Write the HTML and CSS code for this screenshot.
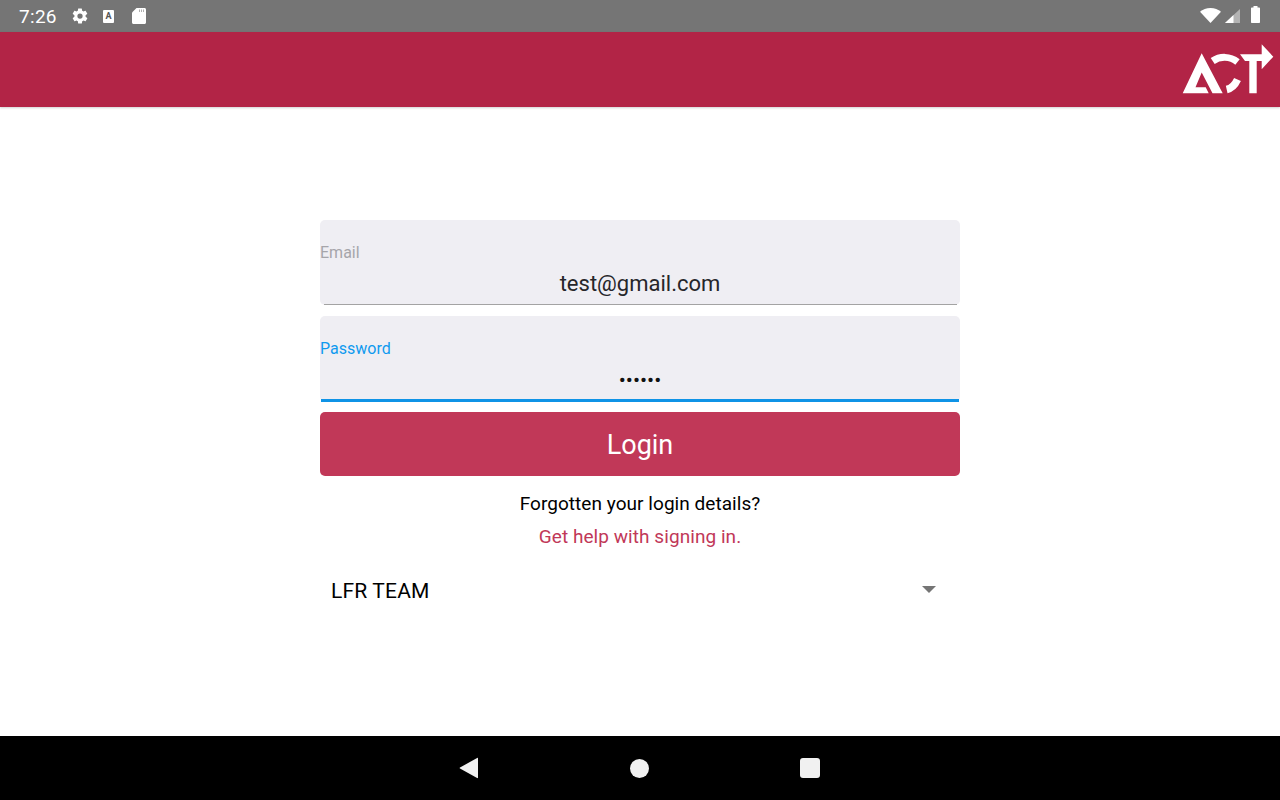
FILE: index.html
```html
<!DOCTYPE html>
<html lang="en">
<head>
    <meta charset="UTF-8">
    <meta name="viewport" content="width=device-width, initial-scale=1.0">
    <title>ACT Login</title>
    <link rel="stylesheet" href="styles.css">
</head>
<body>
    <div class="statusBar">
        <span class="clock">7:26</span>
        <svg class="statusIcon" width="18" height="18" viewBox="0 0 24 24"><path fill="#fff" d="M19.4 13c.04-.32.1-.66.1-1s-.06-.68-.1-1l2.1-1.65c.2-.15.25-.42.12-.64l-2-3.46c-.12-.22-.39-.3-.61-.22l-2.49 1c-.52-.4-1.08-.73-1.69-.98l-.38-2.65A.49.49 0 0 0 14 2h-4c-.25 0-.46.18-.49.42l-.38 2.65c-.61.25-1.17.59-1.69.98l-2.49-1c-.23-.09-.49 0-.61.22l-2 3.46c-.13.22-.07.49.12.64L4.6 11c-.04.32-.1.66-.1 1s.06.68.1 1l-2.1 1.65c-.2.15-.25.42-.12.64l2 3.46c.12.22.39.3.61.22l2.49-1c.52.4 1.08.73 1.69.98l.38 2.65c.03.24.24.42.49.42h4c.25 0 .46-.18.49-.42l.38-2.65c.61-.25 1.17-.59 1.69-.98l2.49 1c.23.09.49 0 .61-.22l2-3.46c.12-.22.07-.49-.12-.64L19.4 13zM12 15.5a3.500 3.500 0 1 1 0-7 3.500 3.500 0 0 1 0 7z"/></svg>
        <span class="fontBadge">A</span>
        <svg class="sdCard" width="14" height="16" viewBox="0 0 14 16"><path fill="#fff" d="M4.500 0H12.500C13.300 0 14 .7 14 1.500V14.500C14 15.300 13.300 16 12.500 16H1.500C.7 16 0 15.300 0 14.500V4.500z"/><path fill="#b0b0b0" d="M7 1.500h1V4H7zM9 1.500h1V4H9zM11 1.500h1V4h-1z"/></svg>
        <div class="statusRight">
            <svg width="21" height="15" viewBox="0 0 21 15"><path fill="#fff" d="M0 3.700C2.700 1.400 6.400 0 10.500 0s7.800 1.400 10.500 3.700L10.500 15z"/></svg>
            <svg class="signal" width="15" height="14" viewBox="0 0 15 14"><path fill="#fff" opacity="0.45" d="M15 0v14H0z"/><path fill="#fff" d="M8.500 6v8H0z"/></svg>
            <svg class="battery" width="9" height="17" viewBox="0 0 9 17"><path fill="#fff" d="M2.500 0h4v1.500H8c.6 0 1 .4 1 1V16c0 .6-.4 1-1 1H1c-.6 0-1-.4-1-1V2.500c0-.6.4-1 1-1h1.500z"/></svg>
        </div>
    </div>

    <header class="appHeader">
        <svg class="logo" width="92" height="52" viewBox="0 0 92 52">
            <!-- A -->
            <path fill="#fff" d="M19.700 9.300 40.700 49.300H30.500L19.700 28.500 13.500 43.300H23.700L26.700 49.300H.7z"/>
            <!-- C -->
            <path fill="none" stroke="#fff" stroke-width="7" d="M30.700 17C38 12 48 12 55.500 18"/>
            <path fill="none" stroke="#fff" stroke-width="7.500" d="M55.500 35.500C53 41 49 44.500 44.700 45.500"/>
            <!-- T and arrow -->
            <path fill="#fff" d="M58 10.300H79.700V.3L91.300 12.700 79.700 25.300V17H74.700V49.300H67.300V17H63z"/>
        </svg>
    </header>

    <main class="content">
        <form class="loginForm">
            <div class="field">
                <label class="fieldLabel">Email</label>
                <div class="fieldValue">test@gmail.com</div>
            </div>
            <div class="field field-active">
                <label class="fieldLabel">Password</label>
                <div class="fieldValue fieldValue-secret">••••••</div>
            </div>
            <button type="button" class="loginBtn">Login</button>
            <p class="helpText">Forgotten your login details?</p>
            <a class="helpLink">Get help with signing in.</a>
            <div class="teamSelect">
                <span>LFR TEAM</span>
                <span class="caret"></span>
            </div>
        </form>
    </main>

    <nav class="navBar">
        <svg width="20" height="22" viewBox="0 0 20 22"><path fill="#f1f1f1" d="M19 1.500v19c0 .6-.4.800-.9.500L1 11.500c-.5-.3-.5-.7 0-1L18.100 1c.5-.3.9-.1.9.500z"/></svg>
        <span class="navCircle"></span>
        <span class="navSquare"></span>
    </nav>
</body>
</html>
```

FILE: styles.css
```css
* {
    box-sizing: border-box;
}
html, body {
    height: 100%;
}
body {
    margin: 0;
    display: flex;
    flex-direction: column;
    height: 800px;
    overflow: hidden;
    background: #fff;
    font-family: Roboto, sans-serif;
    color: #000;
}

/* Status bar */
.statusBar {
    display: flex;
    align-items: center;
    height: 32px;
    padding: 0 20px 0 19px;
    background: #757575;
    color: #fff;
}
.clock {
    width: 52px;
    font-size: 19px;
    letter-spacing: 0.3px;
}
.statusIcon {
    flex: none;
}
.fontBadge {
    display: flex;
    align-items: center;
    justify-content: center;
    width: 11px;
    height: 13px;
    margin: 0 18px 0 14px;
    border-radius: 1px;
    background: #fff;
    color: #555;
    font-size: 9px;
    font-weight: 700;
}
.statusRight {
    display: flex;
    align-items: flex-end;
    height: 17px;
    margin: 0 0 3px auto;
}
.signal {
    margin-left: 4px;
}
.battery {
    margin-left: 11px;
}

/* Header */
.appHeader {
    display: flex;
    justify-content: flex-end;
    align-items: flex-start;
    height: 75px;
    padding: 12px 6px 0 0;
    background: #b22446;
    box-shadow: 0 1px 2px rgba(0, 0, 0, 0.18);
}

/* Form */
.content {
    flex: 1;
    display: flex;
    justify-content: center;
    padding-top: 113px;
}
.loginForm {
    display: flex;
    flex-direction: column;
    width: 640px;
    text-align: center;
}
.field {
    position: relative;
    height: 85px;
    margin-bottom: 11px;
    padding-top: 24px;
    border-radius: 5px;
    background: #efeef3;
    text-align: left;
}
.field::after {
    content: "";
    position: absolute;
    left: 4px;
    right: 3px;
    bottom: 0;
    height: 1px;
    background: #a3a3a3;
}
.field-active {
    height: 86px;
    margin-bottom: 10px;
}
.field-active::after {
    left: 1px;
    right: 1px;
    height: 3px;
    background: #0f93e6;
}
.fieldLabel {
    display: block;
    height: 17px;
    font-size: 16px;
    line-height: 17px;
    color: #a6a5aa;
}
.field-active .fieldLabel {
    color: #0f9aef;
}
.fieldValue {
    margin-top: 8px;
    font-size: 22px;
    line-height: 30px;
    text-align: center;
    color: #26262a;
}
.fieldValue-secret {
    font-size: 21px;
    color: #111;
}
.loginBtn {
    height: 64px;
    padding: 2px 0 0;
    border: none;
    border-radius: 5px;
    background: #c13858;
    color: #fff;
    font-family: Roboto, sans-serif;
    font-size: 27px;
}
.helpText {
    margin: 16px 0 0;
    font-size: 19px;
    line-height: 23px;
    letter-spacing: 0.05px;
}
.helpLink {
    margin-top: 10px;
    font-size: 19px;
    line-height: 23px;
    letter-spacing: 0.06px;
    color: #c13858;
}
.teamSelect {
    display: flex;
    align-items: center;
    justify-content: space-between;
    height: 40px;
    margin-top: 23px;
    padding: 0 24px 0 11px;
    font-size: 21px;
    letter-spacing: 0.17px;
}
.caret {
    width: 0;
    height: 0;
    margin-top: -3px;
    border-left: 7px solid transparent;
    border-right: 7px solid transparent;
    border-top: 7px solid #757575;
}

/* Nav bar */
.navBar {
    display: flex;
    align-items: center;
    justify-content: center;
    gap: 151px;
    height: 64px;
    background: #000;
}
.navBar svg {
    margin-left: -1px;
}
.navCircle {
    width: 19px;
    height: 19px;
    border-radius: 50%;
    background: #f1f1f1;
}
.navSquare {
    width: 20px;
    height: 20px;
    border-radius: 3px;
    background: #f1f1f1;
}
```
